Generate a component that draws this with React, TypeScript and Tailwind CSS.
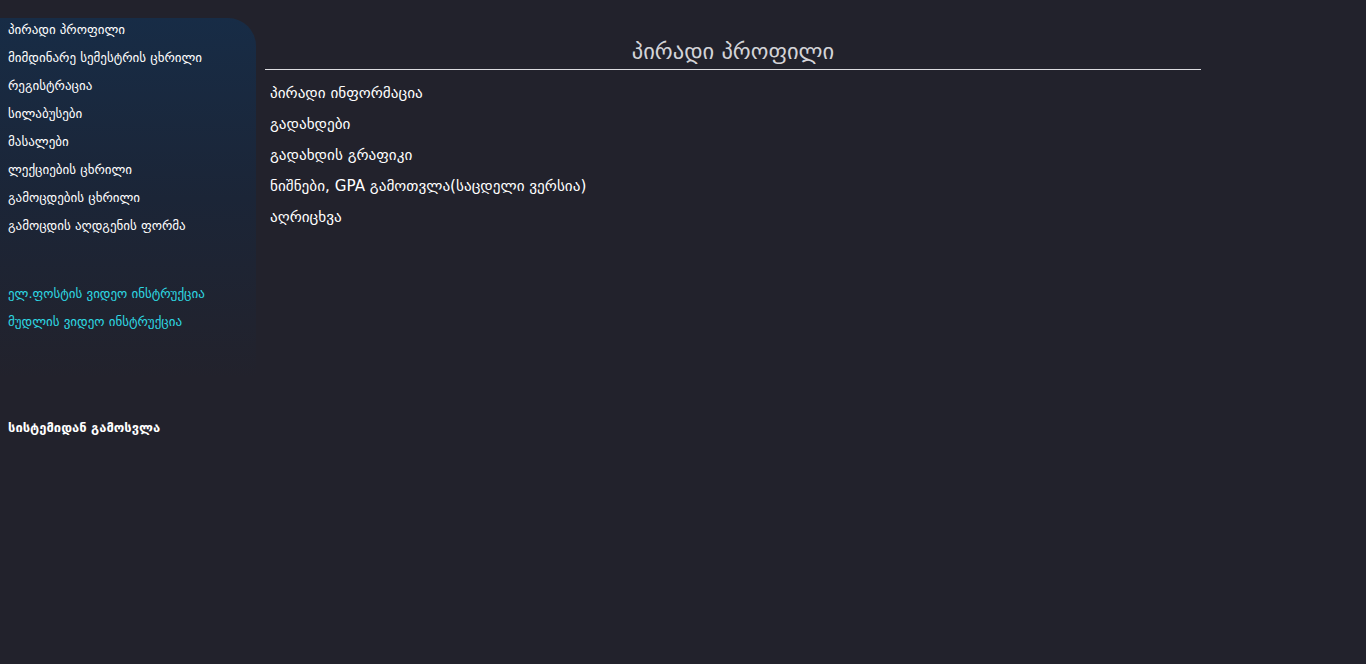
import React from "react";

const menu = [
    "პირადი პროფილი",
    "მიმდინარე სემესტრის ცხრილი",
    "რეგისტრაცია",
    "სილაბუსები",
    "მასალები",
    "ლექციების ცხრილი",
    "გამოცდების ცხრილი",
    "გამოცდის აღდგენის ფორმა",
];

const videos = ["ელ.ფოსტის ვიდეო ინსტრუქცია", "მუდლის ვიდეო ინსტრუქცია"];

const profileLinks = [
    "პირადი ინფორმაცია",
    "გადახდები",
    "გადახდის გრაფიკი",
    "ნიშნები, GPA გამოთვლა(საცდელი ვერსია)",
    "აღრიცხვა",
];

export default function App() {
    return (
        <div
            className="min-h-[664px] w-full bg-[#22222c] flex text-white"
            style={{ fontFamily: "'DejaVu Sans', 'Noto Sans', sans-serif" }}
        >
            {/* Sidebar */}
            <div className="w-[256px] shrink-0 pt-[18px]">
                <div className="h-[360px] rounded-tr-[28px] bg-gradient-to-b from-[#172c46] via-[#1b2537] to-[#22222c] px-2 pt-[3px]">
                    <ul className="text-[13px]">
                        {menu.map((item) => (
                            <li key={item} className="h-[28px] leading-[18px]">
                                {item}
                            </li>
                        ))}
                    </ul>
                    <ul className="mt-[40px] text-[13px] text-[#2ed8e2]">
                        {videos.map((item) => (
                            <li key={item} className="h-[28px] leading-[18px]">
                                {item}
                            </li>
                        ))}
                    </ul>
                </div>
                <div className="px-2 mt-[40px] text-[13px] font-bold">
                    სისტემიდან გამოსვლა
                </div>
            </div>

            {/* Main */}
            <div className="w-[936px] ml-[9px] pt-[36px]">
                <h2 className="text-center text-[22.5px] leading-[30px] text-[#d4d4d8] border-b border-[#dcdce0] pb-[3px]">
                    პირადი პროფილი
                </h2>
                <ul className="pt-[8px] pl-[5px] text-[15.2px]">
                    {profileLinks.map((item) => (
                        <li key={item} className="h-[31px] leading-[31px]">
                            {item}
                        </li>
                    ))}
                </ul>
            </div>
        </div>
    );
}
